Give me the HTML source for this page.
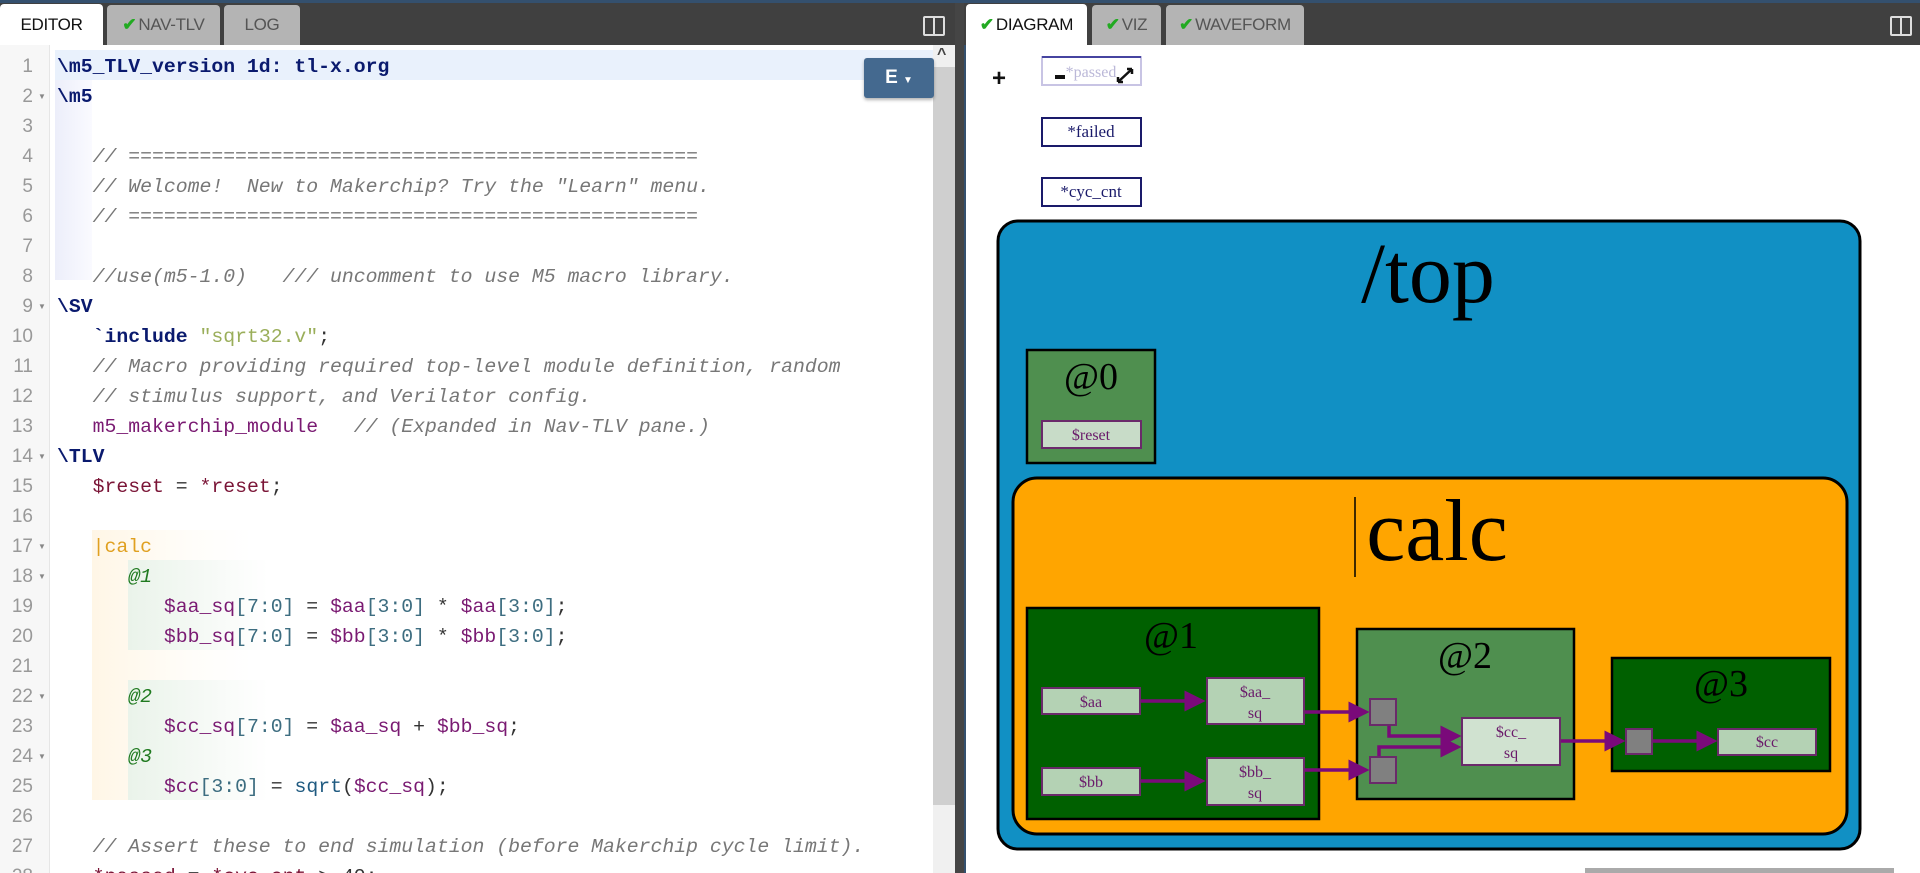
<!DOCTYPE html>
<html style="background:#34506e;overflow:hidden"><head><meta charset="utf-8"><style>
*{margin:0;padding:0;box-sizing:border-box}
body{width:1920px;height:873px;overflow:hidden;background:#34506e;position:relative;font-family:"Liberation Sans",sans-serif}
.bar{position:absolute;top:3px;height:42px;background:#404040}
.tab{position:absolute;top:5px;height:40px;background:#b4b4b4;border-radius:4px 4px 0 0;font-size:17px;color:#555;display:flex;align-items:center;justify-content:center;letter-spacing:-0.3px}
.tab.act{background:#fff;color:#111;height:42px;top:4px}
.ck{color:#2a2;font-weight:bold;margin-right:2px}
.pane{position:absolute;top:45px;background:#fff}
.gut{position:absolute;left:0;top:45px;width:50px;height:828px;background:#f7f7f7;border-right:1px solid #e6e6e6}
.ln{position:absolute;left:0;width:33px;text-align:right;font-size:19px;color:#999;height:30px;line-height:30px}
.fd{position:absolute;left:38px;font-size:8px;color:#888;line-height:30px}
.code{position:absolute;left:57px;font-family:"Liberation Mono",monospace;font-size:19.8px;height:30px;line-height:30px;white-space:pre;color:#333}
.kw{color:#0a1a6e;font-weight:bold}
.cm{color:#777;font-style:italic}
.st{color:#9aae5a}
.pu{color:#7a1a72}
.mr{color:#7a1436}
.br{color:#3d6d80}
.gr{color:#207a20;font-style:italic}
.or{color:#e0a020}
.tl{color:#1f5a80}
.split{position:absolute;width:22px;height:20px;border:2px solid #ddd;border-radius:2px}
.split:after{content:"";position:absolute;left:8px;top:0;width:2px;height:16px;background:#ddd}
</style></head><body>
<div class="bar" style="left:0;width:955px"></div>
<div class="tab act" style="left:0;width:103px">EDITOR</div>
<div class="tab" style="left:107px;width:113px"><span class="ck">✔</span>NAV-TLV</div>
<div class="tab" style="left:224px;width:76px">LOG</div>
<div class="split" style="left:923px;top:16px"></div>
<div class="pane" style="left:0;width:955px;height:828px"></div>
<div class="gut"></div>
<div style="position:absolute;left:55px;top:80px;width:37px;height:200px;background:linear-gradient(90deg,#eceefa,#fafaff)"></div>
<div style="position:absolute;left:55px;top:50px;width:878px;height:30px;background:#e9f1fc"></div>
<div style="position:absolute;left:92px;top:530px;width:160px;height:270px;background:linear-gradient(90deg,#fff6e6,#fffdf9 60%,#fff)"></div>
<div style="position:absolute;left:128px;top:560px;width:140px;height:90px;background:linear-gradient(90deg,#eaf3ea,#fff)"></div>
<div style="position:absolute;left:128px;top:680px;width:140px;height:120px;background:linear-gradient(90deg,#eaf3ea,#fff)"></div>
<div style="position:absolute;left:933px;top:45px;width:22px;height:828px;background:#f0f0f0"></div>
<div style="position:absolute;left:933px;top:67px;width:22px;height:738px;background:#cfcfcf"></div>
<div style="position:absolute;left:937px;top:46px;font-size:16px;color:#444;font-weight:bold">^</div>
<div style="position:absolute;left:955px;top:3px;width:9px;height:870px;background:#454545"></div>
<div style="position:absolute;left:864px;top:58px;width:70px;height:40px;background:#44698f;border-radius:3px;box-shadow:0 2px 3px rgba(0,0,0,.3);color:#fff;font-weight:bold;font-size:19px;line-height:40px;text-align:center">E <span style="font-size:10px">▼</span></div>

<div class="ln" style="top:52px">1</div>
<div class="ln" style="top:82px">2</div><div class="fd" style="top:82px">▼</div>
<div class="ln" style="top:112px">3</div>
<div class="ln" style="top:142px">4</div>
<div class="ln" style="top:172px">5</div>
<div class="ln" style="top:202px">6</div>
<div class="ln" style="top:232px">7</div>
<div class="ln" style="top:262px">8</div>
<div class="ln" style="top:292px">9</div><div class="fd" style="top:292px">▼</div>
<div class="ln" style="top:322px">10</div>
<div class="ln" style="top:352px">11</div>
<div class="ln" style="top:382px">12</div>
<div class="ln" style="top:412px">13</div>
<div class="ln" style="top:442px">14</div><div class="fd" style="top:442px">▼</div>
<div class="ln" style="top:472px">15</div>
<div class="ln" style="top:502px">16</div>
<div class="ln" style="top:532px">17</div><div class="fd" style="top:532px">▼</div>
<div class="ln" style="top:562px">18</div><div class="fd" style="top:562px">▼</div>
<div class="ln" style="top:592px">19</div>
<div class="ln" style="top:622px">20</div>
<div class="ln" style="top:652px">21</div>
<div class="ln" style="top:682px">22</div><div class="fd" style="top:682px">▼</div>
<div class="ln" style="top:712px">23</div>
<div class="ln" style="top:742px">24</div><div class="fd" style="top:742px">▼</div>
<div class="ln" style="top:772px">25</div>
<div class="ln" style="top:802px">26</div>
<div class="ln" style="top:832px">27</div>
<div class="ln" style="top:862px;height:11px;overflow:hidden">28</div>

<div class="code kw" style="top:52px">\m5_TLV_version 1d: tl-x.org</div>
<div class="code kw" style="top:82px">\m5</div>
<div class="code cm" style="top:142px">   // ================================================</div>
<div class="code cm" style="top:172px">   // Welcome!  New to Makerchip? Try the "Learn" menu.</div>
<div class="code cm" style="top:202px">   // ================================================</div>
<div class="code cm" style="top:262px">   //use(m5-1.0)   /// uncomment to use M5 macro library.</div>
<div class="code kw" style="top:292px">\SV</div>
<div class="code" style="top:322px">   <span class="kw">`include</span> <span class="st">"sqrt32.v"</span>;</div>
<div class="code cm" style="top:352px">   // Macro providing required top-level module definition, random</div>
<div class="code cm" style="top:382px">   // stimulus support, and Verilator config.</div>
<div class="code" style="top:412px">   <span class="pu">m5_makerchip_module</span>   <span class="cm">// (Expanded in Nav-TLV pane.)</span></div>
<div class="code kw" style="top:442px">\TLV</div>
<div class="code" style="top:472px">   <span class="mr">$reset</span> = <span class="mr">*reset</span>;</div>
<div class="code" style="top:532px">   <span class="or">|calc</span></div>
<div class="code" style="top:562px">      <span class="gr">@1</span></div>
<div class="code" style="top:592px">         <span class="pu">$aa_sq</span><span class="br">[7:0]</span> = <span class="pu">$aa</span><span class="br">[3:0]</span> * <span class="pu">$aa</span><span class="br">[3:0]</span>;</div>
<div class="code" style="top:622px">         <span class="pu">$bb_sq</span><span class="br">[7:0]</span> = <span class="pu">$bb</span><span class="br">[3:0]</span> * <span class="pu">$bb</span><span class="br">[3:0]</span>;</div>
<div class="code" style="top:682px">      <span class="gr">@2</span></div>
<div class="code" style="top:712px">         <span class="pu">$cc_sq</span><span class="br">[7:0]</span> = <span class="pu">$aa_sq</span> + <span class="pu">$bb_sq</span>;</div>
<div class="code" style="top:742px">      <span class="gr">@3</span></div>
<div class="code" style="top:772px">         <span class="pu">$cc</span><span class="br">[3:0]</span> = <span class="tl">sqrt</span>(<span class="pu">$cc_sq</span>);</div>
<div class="code cm" style="top:832px">   // Assert these to end simulation (before Makerchip cycle limit).</div>
<div class="code" style="top:862px;height:11px;overflow:hidden;line-height:30px">   <span class="mr">*passed</span> = <span class="mr">*cyc_cnt</span> &gt; 40;</div>

<div class="bar" style="left:964px;width:956px"></div>
<div class="pane" style="left:966px;width:954px;height:828px"></div>
<div class="tab act" style="left:966px;width:121px"><span class="ck">✔</span>DIAGRAM</div>
<div class="tab" style="left:1092px;width:69px"><span class="ck">✔</span>VIZ</div>
<div class="tab" style="left:1166px;width:138px"><span class="ck">✔</span>WAVEFORM</div>
<div class="split" style="left:1890px;top:16px"></div>

<svg style="position:absolute;left:0;top:0" width="1920" height="873" font-family="Liberation Serif,serif">
<defs><marker id="a" markerWidth="6" markerHeight="6" refX="5" refY="3" orient="auto" markerUnits="strokeWidth"><path d="M0,0L6,3L0,6z" fill="#7a0a7a"/></marker></defs>
<text x="999" y="86" font-family="Liberation Sans" font-weight="bold" font-size="24" fill="#111" text-anchor="middle">+</text>
<rect x="1042" y="57" width="99" height="28" fill="#fff" stroke="#c8c4e4" stroke-width="2"/>
<line x1="1042" y1="57" x2="1141" y2="57" stroke="#1a1a8a" stroke-width="1.5"/>
<text x="1091" y="77" font-size="16" fill="#bbb8d8" text-anchor="middle">*passed</text>
<rect x="1055" y="75" width="10" height="4" fill="#111"/>
<path d="M1118,82L1132,69M1118,82l0,-5M1118,82l5,0M1132,69l-5,0M1132,69l0,5" stroke="#111" stroke-width="2.5" fill="none"/>
<rect x="1042" y="118" width="99" height="28" fill="#fff" stroke="#1a1a6a" stroke-width="2"/>
<text x="1091" y="137" font-size="17" fill="#1a1a6a" text-anchor="middle">*failed</text>
<rect x="1042" y="178" width="99" height="28" fill="#fff" stroke="#1a1a6a" stroke-width="2"/>
<text x="1091" y="197" font-size="17" fill="#1a1a6a" text-anchor="middle">*cyc_cnt</text>

<rect x="998" y="221" width="862" height="628" rx="20" fill="#1190c4" stroke="#000" stroke-width="3"/>
<text x="1428" y="302" font-size="86" text-anchor="middle">/top</text>
<rect x="1027" y="350" width="128" height="113" fill="#4f8f4f" stroke="#000" stroke-width="2.5"/>
<text x="1091" y="389" font-size="38" text-anchor="middle">@0</text>
<rect x="1042" y="421" width="99" height="27" fill="#c8dcc8" stroke="#6a2a6a" stroke-width="2"/>
<text x="1091" y="440" font-size="16" fill="#6a1a6a" text-anchor="middle">$reset</text>

<rect x="1013" y="478" width="834" height="356" rx="24" fill="#ffa500" stroke="#000" stroke-width="3"/>
<line x1="1355" y1="497" x2="1355" y2="577" stroke="#000" stroke-width="1.5"/>
<text x="1437" y="560" font-size="88" text-anchor="middle">calc</text>

<rect x="1027" y="608" width="292" height="211" fill="#006000" stroke="#000" stroke-width="2.5"/>
<text x="1171" y="648" font-size="38" text-anchor="middle">@1</text>
<rect x="1357" y="629" width="217" height="170" fill="#4f8f4f" stroke="#000" stroke-width="2.5"/>
<text x="1465" y="668" font-size="38" text-anchor="middle">@2</text>
<rect x="1612" y="658" width="218" height="113" fill="#006000" stroke="#000" stroke-width="2.5"/>
<text x="1721" y="696" font-size="38" text-anchor="middle">@3</text>

<g stroke="#7a0a7a" stroke-width="3.5" fill="none" marker-end="url(#a)">
<path d="M1141,701H1202"/>
<path d="M1141,781H1202"/>
<path d="M1305,712H1366"/>
<path d="M1305,770H1366"/>
<path d="M1389,725V736H1458"/>
<path d="M1379,757V747H1458"/>
<path d="M1560,741H1622"/>
<path d="M1652,741H1714"/>
</g>
<g stroke="#6a2a6a" stroke-width="2">
<rect x="1042" y="688" width="98" height="26" fill="#b4d2b4"/>
<rect x="1207" y="678" width="97" height="46" fill="#b4d2b4"/>
<rect x="1042" y="768" width="98" height="27" fill="#b4d2b4"/>
<rect x="1207" y="758" width="97" height="47" fill="#b4d2b4"/>
<rect x="1370" y="699" width="26" height="26" fill="#808080"/>
<rect x="1370" y="757" width="26" height="26" fill="#808080"/>
<rect x="1462" y="718" width="98" height="47" fill="#d0e2d0"/>
<rect x="1626" y="729" width="26" height="25" fill="#808080"/>
<rect x="1718" y="729" width="98" height="26" fill="#b4d2b4"/>
</g>
<g font-size="16" fill="#6a1a6a" text-anchor="middle">
<text x="1091" y="707">$aa</text>
<text x="1255" y="697">$aa_</text><text x="1255" y="718">sq</text>
<text x="1091" y="787">$bb</text>
<text x="1255" y="777">$bb_</text><text x="1255" y="798">sq</text>
<text x="1511" y="737">$cc_</text><text x="1511" y="758">sq</text>
<text x="1767" y="747">$cc</text>
</g>
<rect x="1585" y="868" width="309" height="5" fill="#aaa"/>
</svg>
</body></html>
